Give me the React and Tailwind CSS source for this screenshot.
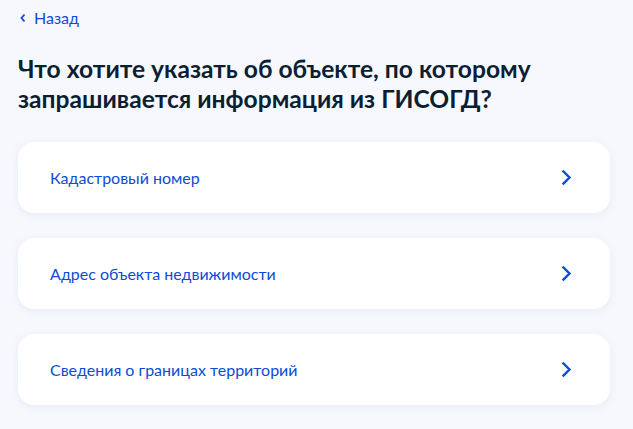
import React from "react";

function Chevron({ className }) {
  return (
    <svg className={className} width="11" height="17" viewBox="0 0 11 17" fill="none">
      <path d="M2.5 2.5l6 6-6 6" stroke="#0d4cd3" strokeWidth="2.4" strokeLinecap="square" strokeLinejoin="miter" />
    </svg>
  );
}

const items = ["Кадастровый номер", "Адрес объекта недвижимости", "Сведения о границах территорий"];

export default function App() {
  return (
    <div className="min-h-[429px] w-[633px] bg-[#f6f8fd] px-[18px] pt-[8px]" style={{ fontFamily: "Lato, 'Noto Sans', sans-serif" }}>
      <div className="flex h-[20px] items-center gap-[7px] text-[16px] text-[#0d4cd3]">
        <svg width="8" height="10" viewBox="0 0 8 10" fill="none" className="ml-[1px]">
          <path d="M5.5 1.5L2.5 5l3 3.5" stroke="#0d4cd3" strokeWidth="1.8" />
        </svg>
        <span>Назад</span>
      </div>
      <h1 className="mt-[26px] text-[24.6px] font-bold leading-[30px] text-[#0b1f33]">
        Что хотите указать об объекте, по которому
        <br />
        запрашивается информация из ГИСОГД?
      </h1>
      <div className="mt-[28px] flex w-[592px] flex-col gap-[25px]">
        {items.map((t) => (
          <div
            key={t}
            className="flex h-[71px] items-center justify-between rounded-[16px] bg-white pl-[32px] pr-[38px] shadow-[0_2px_8px_rgba(171,181,206,0.18)]"
          >
            <span className="text-[16px] text-[#0d4cd3]">{t}</span>
            <Chevron />
          </div>
        ))}
      </div>
    </div>
  );
}
